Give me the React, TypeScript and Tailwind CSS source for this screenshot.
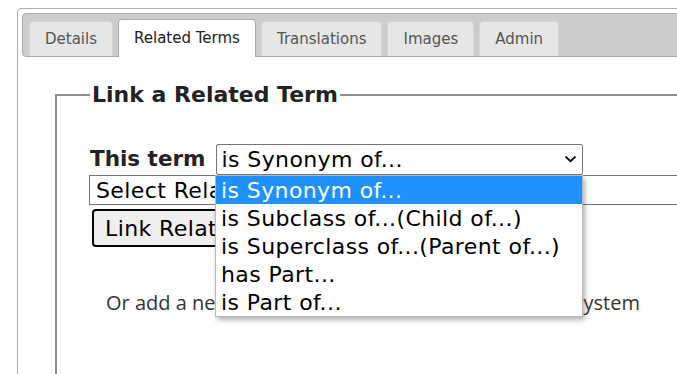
const tabs = ['Details', 'Related Terms', 'Translations', 'Images', 'Admin']

const options = [
  'is Synonym of...',
  'is Subclass of...(Child of...)',
  'is Superclass of...(Parent of...)',
  'has Part...',
  'is Part of...',
]

export default function App() {
  return (
    <div className="relative w-[677px] h-[374px] overflow-hidden bg-white font-['DejaVu_Sans',sans-serif] text-[#333]">
      {/* Tabs widget */}
      <div className="ml-[17px] mt-[8px] w-[720px] h-[420px] border border-[#aaaaaa] rounded-[4px] p-[4px]">
        <div className="flex items-end gap-[5px] h-[44px] pl-[6px] bg-[#cccccc] border border-[#aaaaaa] rounded-[4px]">
          {tabs.map((t, i) =>
            i === 1 ? (
              <div
                key={t}
                className="-mb-px h-[38px] px-[15px] flex items-center bg-white border border-b-0 border-[#aaaaaa] rounded-t-[4px] text-[15px] text-[#212121]"
              >
                {t}
              </div>
            ) : (
              <div
                key={t}
                className="h-[35px] px-[15px] flex items-center bg-[#e6e6e6] border border-b-0 border-[#d3d3d3] rounded-t-[4px] text-[15px] text-[#555]"
              >
                {t}
              </div>
            )
          )}
        </div>

        <div className="pl-[33px] pt-[21px]">
          <fieldset className="border-2 border-[#8f8f8f] pl-[33px] pt-[32px] h-[400px]">
            <legend className="px-[2px] text-[22px] font-bold text-[#222]">Link a Related Term</legend>

            <div className="flex items-center">
              <span className="text-[21.5px] font-bold text-[#222] mr-[10px]">This term</span>
              <div className="flex items-center justify-between w-[367px] h-[31px] border border-[#767676] rounded-[2px] pl-[5px] pr-[5px] bg-white text-[22px] tracking-[0.4px] text-black">
                <span>is Synonym of...</span>
                <svg width="13" height="8" viewBox="0 0 13 8">
                  <path d="M1.5 1.5 L6.5 6.2 L11.5 1.5" fill="none" stroke="#111" strokeWidth="1.9" />
                </svg>
              </div>
            </div>

            <div className="-ml-[1px] w-[620px] h-[30px] border border-[#767676] px-[6px] flex items-center text-[22px] tracking-[0.4px] text-black bg-white whitespace-nowrap">
              Select Related Term
            </div>

            <button className="ml-[2px] mt-[4px] h-[38px] px-[11px] border-2 border-black rounded-[4px] bg-[#efefef] text-[22px] tracking-[0.4px] text-black whitespace-nowrap">
              Link Related Term
            </button>

            <p className="mt-[41px] ml-[16px] text-[20px] text-[#333] font-['Open_Sans',sans-serif] whitespace-nowrap">
              Or add a new Related Term which is not yet in the system
            </p>
          </fieldset>
        </div>
      </div>

      {/* Open dropdown list */}
      <div className="absolute left-[215px] top-[175px] w-[368px] h-[142px] bg-white border border-[#b8b8b8] shadow-[2px_3px_5px_rgba(0,0,0,0.3)] flex flex-col text-[22px] tracking-[0.4px] text-black">
        {options.map((o, i) => (
          <div
            key={o}
            className={
              i === 0
                ? 'h-[28px] px-[5px] flex items-center bg-[#1e90ff] text-white whitespace-nowrap'
                : 'h-[28px] px-[5px] flex items-center whitespace-nowrap'
            }
          >
            {o}
          </div>
        ))}
      </div>
    </div>
  )
}
